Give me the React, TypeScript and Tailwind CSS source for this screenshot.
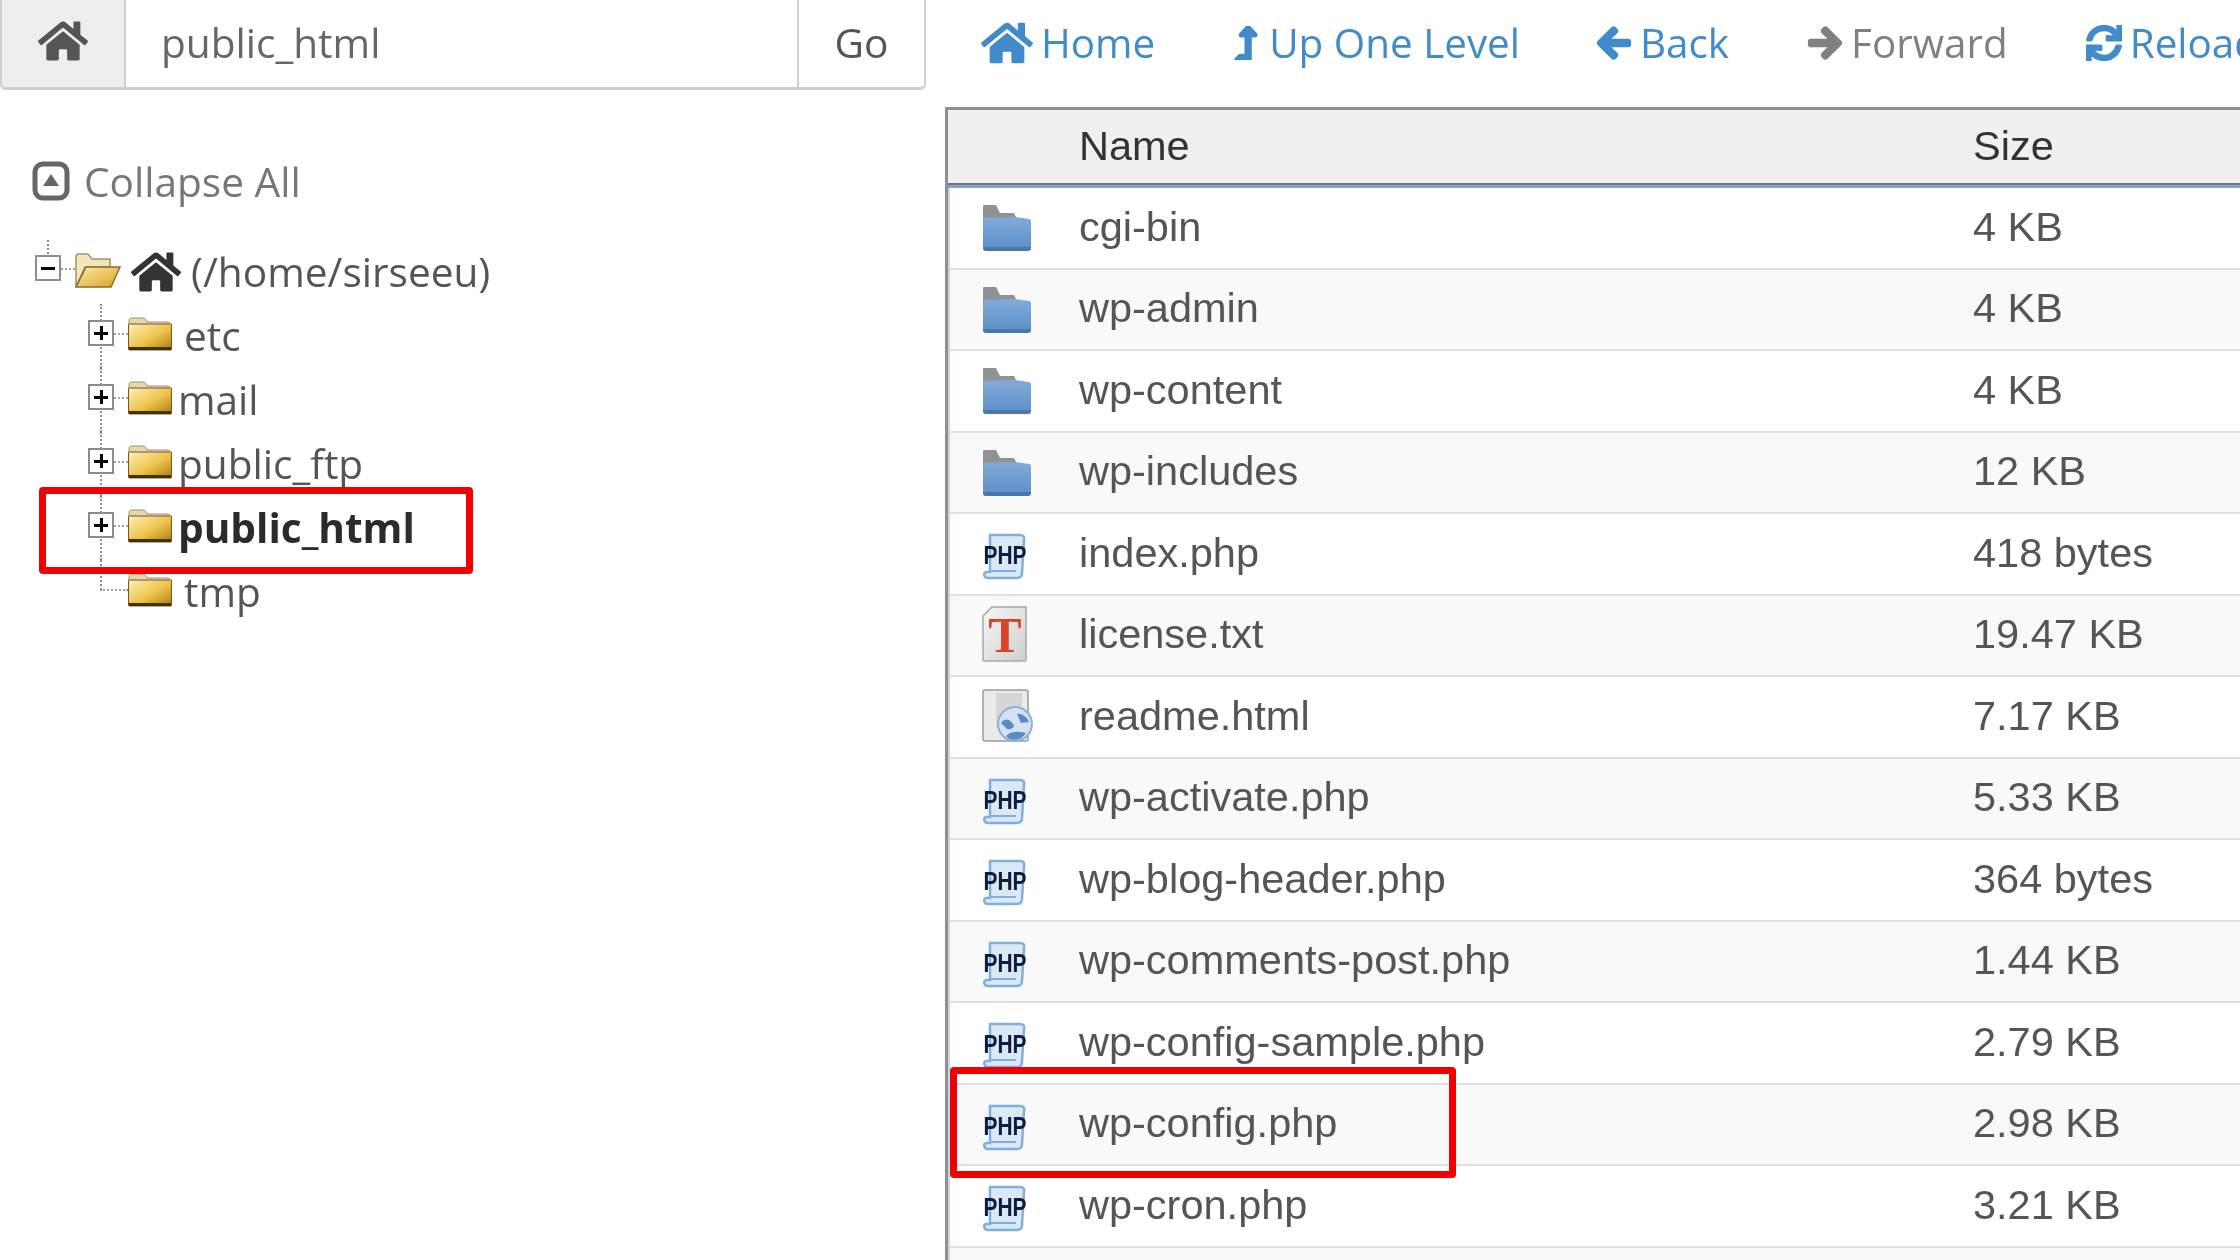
import { FaHome, FaLevelUpAlt, FaArrowLeft, FaArrowRight, FaSync } from "react-icons/fa";

const files = [
  { name: "cgi-bin", size: "4 KB", type: "dir" },
  { name: "wp-admin", size: "4 KB", type: "dir" },
  { name: "wp-content", size: "4 KB", type: "dir" },
  { name: "wp-includes", size: "12 KB", type: "dir" },
  { name: "index.php", size: "418 bytes", type: "php" },
  { name: "license.txt", size: "19.47 KB", type: "txt" },
  { name: "readme.html", size: "7.17 KB", type: "html" },
  { name: "wp-activate.php", size: "5.33 KB", type: "php" },
  { name: "wp-blog-header.php", size: "364 bytes", type: "php" },
  { name: "wp-comments-post.php", size: "1.44 KB", type: "php" },
  { name: "wp-config-sample.php", size: "2.79 KB", type: "php" },
  { name: "wp-config.php", size: "2.98 KB", type: "php" },
  { name: "wp-cron.php", size: "3.21 KB", type: "php" },
];

function BlueFolder() {
  return (
    <svg width="50" height="48" viewBox="0 0 50 48" className="mt-[3px]">
      <defs>
        <linearGradient id="blueBody" x1="0" y1="0" x2="0" y2="1">
          <stop offset="0" stopColor="#82abd9" />
          <stop offset="1" stopColor="#5a8fc8" />
        </linearGradient>
      </defs>
      <path d="M1 2c0-1 1-1 2-1h11l4 8h14l3 6H1z" fill="#8f9296" />
      <path d="M1 14l32-1 14 2c1 0 2 1 2 2v26c0 2-1 3-3 3H4c-2 0-3-1-3-3z" fill="url(#blueBody)" />
      <path d="M1 43h48v1c0 2-1 3-3 3H4c-2 0-3-1-3-3z" fill="#4a76a8" />
    </svg>
  );
}

function PhpIcon() {
  return (
    <svg width="48" height="48" viewBox="0 0 48 48" className="mt-[9px]">
      <path d="M8 2h30c3 0 5 2 4 5l-2 33c0 3-2 5-5 5H6c-4 0-5-5-2-6h4z" fill="#dbe9f7" stroke="#7fb0dc" strokeWidth="2.5" />
      <path d="M8 38h26" stroke="#7fb0dc" strokeWidth="2" />
      <text x="23" y="31" textAnchor="middle" fontFamily="'Liberation Sans', sans-serif" fontWeight="700" fontSize="25" fill="#101c3c" textLength="43" lengthAdjust="spacingAndGlyphs">PHP</text>
    </svg>
  );
}

function TxtIcon() {
  return (
    <svg width="46" height="56" viewBox="0 0 46 56">
      <defs>
        <linearGradient id="txtBody" x1="0" y1="0" x2="1" y2="1">
          <stop offset="0" stopColor="#f7f7f7" />
          <stop offset="1" stopColor="#cfcfcf" />
        </linearGradient>
      </defs>
      <path d="M10 1h34v53a1 1 0 0 1-1 1H2a1 1 0 0 1-1-1V10z" fill="url(#txtBody)" stroke="#a8a8a8" strokeWidth="1.5" />
      <text x="23" y="46" textAnchor="middle" fontFamily="'Liberation Serif', serif" fontWeight="700" fontSize="50" fill="#d9432a">T</text>
    </svg>
  );
}

function HtmlIcon() {
  return (
    <svg width="52" height="54" viewBox="0 0 52 54">
      <rect x="1" y="1" width="45" height="51" rx="2" fill="#eaeaea" stroke="#9b9b9b" strokeWidth="1.5" />
      <rect x="14" y="4" width="26" height="34" fill="#d6d6d6" />
      <circle cx="33" cy="35" r="17" fill="#d3e1f0" stroke="#8fb0d3" strokeWidth="2" />
      <path d="M19 34c5-6 9-3 12 1s-3 6-6 5zM35 25c5-1 10 3 12 8l-8 1zM24 47c5-5 12-5 20-3-5 8-15 9-20 3z" fill="#5a8cc4" />
    </svg>
  );
}

function YellowFolder() {
  return (
    <svg width="44" height="34" viewBox="0 0 44 34">
      <defs>
        <linearGradient id="yellowBody" x1="0" y1="0" x2="1" y2="1">
          <stop offset="0" stopColor="#fdf0b5" />
          <stop offset="0.55" stopColor="#efc24a" />
          <stop offset="1" stopColor="#a87a18" />
        </linearGradient>
      </defs>
      <path d="M1 4c0-2 1-3 3-3h11c2 0 3 1 4 4h20c2 0 4 1 4 3v3H1z" fill="#e3d8b0" stroke="#a3946a" />
      <rect x="0.5" y="7" width="43" height="26" rx="1" fill="url(#yellowBody)" stroke="#6f5a24" />
      <path d="M1 30h42v3H1z" fill="#3f3212" />
    </svg>
  );
}

function OpenFolder() {
  return (
    <svg width="46" height="36" viewBox="0 0 46 36">
      <defs>
        <linearGradient id="openBody" x1="0" y1="0" x2="1" y2="1">
          <stop offset="0" stopColor="#fdeea6" />
          <stop offset="1" stopColor="#d99f28" />
        </linearGradient>
      </defs>
      <path d="M1 34V4c0-2 1-3 3-3h9l4 5h18v8H10z" fill="#f2e6bf" stroke="#a3946a" strokeWidth="1.5" />
      <path d="M11 14h34L36 34H1z" fill="url(#openBody)" stroke="#8a6d24" strokeWidth="1.5" />
    </svg>
  );
}

function Expander({ open }: { open?: boolean }) {
  return (
    <span className="relative flex h-[26px] w-[26px] shrink-0 items-center justify-center border-2 border-[#8c8c8c] bg-white">
      <span className="absolute h-[3px] w-[14px] bg-black" />
      {!open && <span className="absolute h-[14px] w-[3px] bg-black" />}
    </span>
  );
}

function TreeRow({ label, bold, last, pad }: { label: string; bold?: boolean; last?: boolean; pad: string }) {
  return (
    <div className="relative flex h-16 items-center pl-[88px]">
      <span className={`absolute left-[100px] top-0 w-0 border-l-2 border-dotted border-[#8c8c8c] ${last ? "h-[30px]" : "h-16"}`} />
      {last ? (
        <span className="relative w-[26px] shrink-0" />
      ) : (
        <span className="relative -mt-[6px]"><Expander /></span>
      )}
      <span className={`-mt-[4px] h-0 w-[14px] shrink-0 border-t-2 border-dotted border-[#a0a0a0] ${last ? "-ml-[14px] w-[28px]" : ""}`} />
      <span className="-mt-[4px] flex shrink-0"><YellowFolder /></span>
      <span className={`${pad} whitespace-nowrap text-[40.6px] ${bold ? "font-bold text-[#2b2b2b]" : "text-[#555]"}`}>{label}</span>
    </div>
  );
}

export default function App() {
  return (
    <div className="relative flex h-[1260px] w-[2240px] overflow-hidden bg-white font-['Open_Sans',sans-serif] blur-[0.5px]">
      {/* left side: path bar + tree */}
      <div className="w-[926px] shrink-0">
        <div className="flex h-[90px] overflow-hidden rounded-b-md border-x-2 border-b-[3px] border-[#cfcfcf]">
          <div className="flex w-[124px] shrink-0 items-start justify-center border-r-2 border-[#cfcfcf] bg-[#eeeeee] pt-[16px]">
            <FaHome className="text-[50px] text-[#555]" />
          </div>
          <div className="flex flex-1 items-center pl-[35px] text-[40.6px] text-[#666]">public_html</div>
          <div className="flex w-[127px] shrink-0 items-center justify-center border-l-2 border-[#cfcfcf] text-[40.6px] text-[#555]">Go</div>
        </div>

        <div className="mt-[62px] flex h-[60px] items-center pl-[32px] text-[40.6px] text-[#777]">
          <svg width="38" height="40" viewBox="0 0 38 40" className="mr-[14px] -mt-[2px] shrink-0">
            <rect x="3" y="3" width="32" height="34" rx="8" fill="none" stroke="#666" strokeWidth="5" />
            <path d="M19 13l8 12H11z" fill="#666" />
          </svg>
          Collapse All
        </div>

        <div className="relative mt-[28px] flex h-16 items-center pl-[35px]">
          <span className="absolute left-[47px] top-0 h-[18px] w-0 border-l-2 border-dotted border-[#8c8c8c]" />
          <span className="-mt-[8px]"><Expander open /></span>
          <span className="-mt-[6px] h-0 w-[14px] border-t-2 border-dotted border-[#a0a0a0]" />
          <span className="-mt-[2px] flex"><OpenFolder /></span>
          <FaHome className="ml-[10px] shrink-0 text-[50px] text-[#333]" />
          <span className="ml-[10px] whitespace-nowrap text-[40.6px] text-[#555]">(/home/sirseeu)</span>
        </div>
        <TreeRow label="etc" pad="ml-[12px]" />
        <TreeRow label="mail" pad="ml-[6px]" />
        <TreeRow label="public_ftp" pad="ml-[6px]" />
        <TreeRow label="public_html" pad="ml-[6px]" bold />
        <TreeRow label="tmp" pad="ml-[12px]" last />
      </div>

      {/* right side: toolbar + file table */}
      <div className="ml-[19px] min-w-0 flex-1">
        <div className="flex h-[107px] items-start gap-[78px] whitespace-nowrap pl-[36px] pt-[13px] text-[40.4px] text-[#428bca]">
          <span className="flex items-center gap-[8px]"><FaHome className="text-[52px]" />Home</span>
          <span className="-ml-[4px] flex items-center gap-[6px]"><FaLevelUpAlt className="text-[34px]" stroke="currentColor" strokeWidth={30} />Up One Level</span>
          <span className="-ml-[2px] flex items-center gap-[8px]"><FaArrowLeft className="text-[36px]" stroke="currentColor" strokeWidth={40} />Back</span>
          <span className="flex items-center gap-[8px] text-[#808080]"><FaArrowRight className="text-[36px]" stroke="currentColor" strokeWidth={40} />Forward</span>
          <span className="flex items-center gap-[8px]"><FaSync className="text-[36px]" stroke="currentColor" strokeWidth={20} />Reload</span>
        </div>

        <div className="border-l-[3px] border-t-[3px] border-[#8f8f8f] font-['Liberation_Sans',sans-serif] text-[41.5px]">
          <div className="border-b-[3px] border-[#7fa3d8]">
            <div className="flex h-[75px] items-center border-b-2 border-[#777] bg-[#f0f0f0] text-[#333]">
              <span className="w-[131px] shrink-0" />
              <span className="w-[894px] shrink-0">Name</span>
              <span>Size</span>
            </div>
          </div>
          <div className="border-l-2 border-[#c5d6ee]">
            {files.map((f, i) => (
              <div key={f.name} className={`flex h-[81.5px] items-center border-b-2 border-[#e0e0e0] pb-[2px] text-[#555] ${i % 2 ? "bg-[#f9f9f9]" : "bg-white"}`}>
                <span className="flex w-[129px] shrink-0 items-center pl-[32px]">
                  {f.type === "dir" && <BlueFolder />}
                  {f.type === "php" && <PhpIcon />}
                  {f.type === "txt" && <TxtIcon />}
                  {f.type === "html" && <HtmlIcon />}
                </span>
                <span className="w-[894px] shrink-0 whitespace-nowrap">{f.name}</span>
                <span className="whitespace-nowrap">{f.size}</span>
              </div>
            ))}
            <div className="h-[40px] bg-[#f9f9f9]" />
          </div>
        </div>
      </div>

      {/* red annotation boxes */}
      <div className="absolute left-[39px] top-[487px] h-[87px] w-[434px] rounded-sm border-[7px] border-[#f00000]" />
      <div className="absolute left-[950px] top-[1067px] h-[111px] w-[506px] rounded-sm border-[7px] border-[#f00000]" />
    </div>
  );
}
